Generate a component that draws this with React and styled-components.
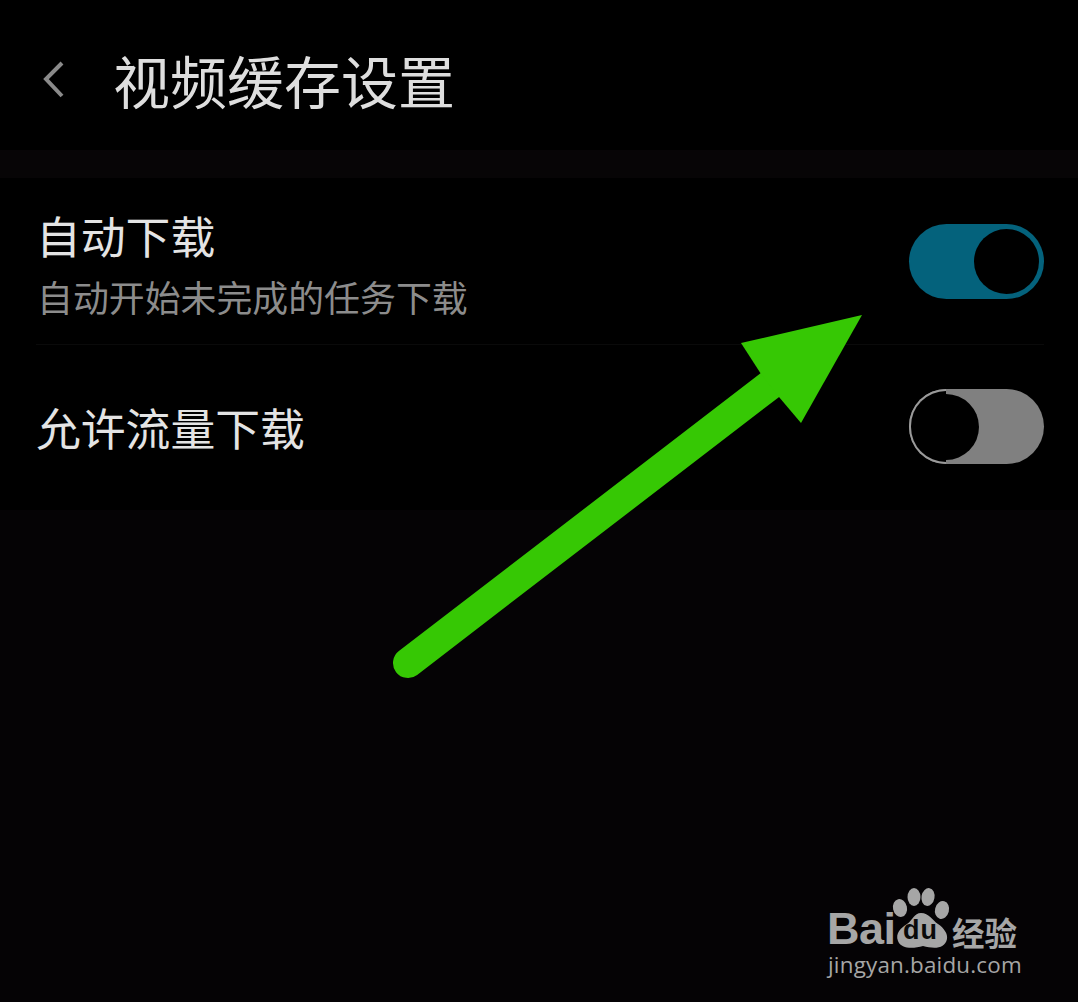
import React from 'react'
import styled, { createGlobalStyle } from 'styled-components'

const cjk = '"Noto Sans CJK SC", "Liberation Sans", sans-serif'

const Global = createGlobalStyle`
  html, body {
    margin: 0;
    padding: 0;
    background: #050305;
  }
`

const Page = styled.div`
  position: relative;
  width: 1078px;
  height: 1002px;
  overflow: hidden;
  background: #050305;
  font-family: ${cjk};
`

const Header = styled.header`
  display: flex;
  align-items: center;
  height: 150px;
  padding: 8px 0 0 42px;
  box-sizing: border-box;
  background: #000;
`

const BackIcon = styled.svg`
  width: 24px;
  height: 40px;
  margin-right: 47px;
`

const Title = styled.h1`
  margin: 0;
  font-size: 57px;
  line-height: 1;
  font-weight: 400;
  color: #dedede;
`

const Band = styled.div`
  height: 28px;
  background: #070506;
`

const Section = styled.section`
  background: #000;
  padding: 0 34px 0 36px;
`

const Row = styled.div`
  display: flex;
  align-items: center;
  justify-content: space-between;
  height: ${p => p.$h}px;
  box-sizing: border-box;
  padding-bottom: ${p => p.$pb || 0}px;
  border-bottom: ${p => (p.$line ? '1px solid #0a0a0a' : 'none')};
`

const Labels = styled.div`
  display: flex;
  flex-direction: column;
  gap: 12px;
  padding-top: 3px;
`

const Name = styled.div`
  font-size: 44.8px;
  line-height: 54px;
  color: #e4e4e4;
`

const Hint = styled.div`
  font-size: 35.9px;
  line-height: 44px;
  color: #8c8c8c;
  margin-left: 1px;
`

const Track = styled.div`
  position: relative;
  flex: none;
  width: 135px;
  height: 75px;
  border-radius: 38px;
  background: ${p => (p.$on ? '#04627c' : '#808080')};
  ${p => !p.$on && `
    &::before {
      content: '';
      position: absolute;
      left: 0;
      top: 0;
      width: 37px;
      height: 75px;
      box-sizing: border-box;
      background: #000;
      border: 2px solid #9a9a9a;
      border-right: none;
      border-radius: 38px 0 0 38px;
    }
  `}
`

const Knob = styled.div`
  position: absolute;
  top: 5px;
  ${p => (p.$on ? 'right: 5px;' : 'left: 4px;')}
  width: ${p => (p.$on ? 65 : 66)}px;
  height: ${p => (p.$on ? 65 : 66)}px;
  border-radius: 50%;
  background: #000;
`

const Arrow = styled.svg`
  position: absolute;
  left: 0;
  top: 0;
  width: 1078px;
  height: 1002px;
  pointer-events: none;
`

const Mark = styled.div`
  position: absolute;
  left: 827px;
  top: 887px;
  width: 200px;
  height: 95px;
  color: #a6a6a6;
`

const Bai = styled.span`
  position: absolute;
  left: 0;
  top: 17px;
  font: 700 45px/50px "Liberation Sans", sans-serif;
  letter-spacing: -0.5px;
`

const Paw = styled.svg`
  position: absolute;
  left: 60px;
  top: 0;
  width: 70px;
  height: 64px;
`

const Du = styled.span`
  position: absolute;
  left: 76px;
  top: 30px;
  font: 700 27px/27px "Liberation Sans", sans-serif;
  letter-spacing: 1px;
  color: #0a0a0a;
`

const Jing = styled.span`
  position: absolute;
  left: 125px;
  top: 29px;
  font-size: 32.5px;
  line-height: 32px;
  font-weight: 700;
  white-space: nowrap;
`

const Url = styled.span`
  position: absolute;
  left: 1px;
  top: 65px;
  font: 400 22.4px/26px "Open Sans", sans-serif;
  letter-spacing: 0.2px;
  white-space: nowrap;
`

function Toggle({ on }) {
  return (
    <Track $on={on}>
      <Knob $on={on} />
    </Track>
  )
}

export default function App() {
  return (
    <Page>
      <Global />
      <Header>
        <BackIcon viewBox="0 0 24 40">
          <path d="M20 4 L4 20 L20 37" fill="none" stroke="#8a8a8a" strokeWidth="4" />
        </BackIcon>
        <Title>视频缓存设置</Title>
      </Header>
      <Band />
      <Section>
        <Row $h={167} $line>
          <Labels>
            <Name>自动下载</Name>
            <Hint>自动开始未完成的任务下载</Hint>
          </Labels>
          <Toggle on />
        </Row>
        <Row $h={165} $pb={2}>
          <Name>允许流量下载</Name>
          <Toggle />
        </Row>
      </Section>
      <Arrow viewBox="0 0 1078 1002">
        <line x1="408" y1="663" x2="770" y2="385" stroke="#36c804" strokeWidth="30" strokeLinecap="round" />
        <polygon points="862,315 741,343 761,374 779,397 801,423" fill="#36c804" />
      </Arrow>
      <Mark>
        <Bai>Bai</Bai>
        <Paw viewBox="0 0 70 64">
          <ellipse cx="13" cy="21" rx="7" ry="9" transform="rotate(-12 13 21)" fill="#a6a6a6" />
          <ellipse cx="27" cy="10" rx="6.5" ry="9" fill="#a6a6a6" />
          <ellipse cx="41" cy="10" rx="6.5" ry="9" transform="rotate(10 41 10)" fill="#a6a6a6" />
          <ellipse cx="55" cy="23" rx="7" ry="9" transform="rotate(15 55 23)" fill="#a6a6a6" />
          <path d="M34 26 C42 26 45 33 51 37 C57 41 61 47 60 52 C58 62 47 62 36 59 C26 62 14 62 11 54 C8 46 14 41 20 37 C26 33 27 26 34 26 Z" fill="#a6a6a6" />
        </Paw>
        <Du>du</Du>
        <Jing>经验</Jing>
        <Url>jingyan.baidu.com</Url>
      </Mark>
    </Page>
  )
}
